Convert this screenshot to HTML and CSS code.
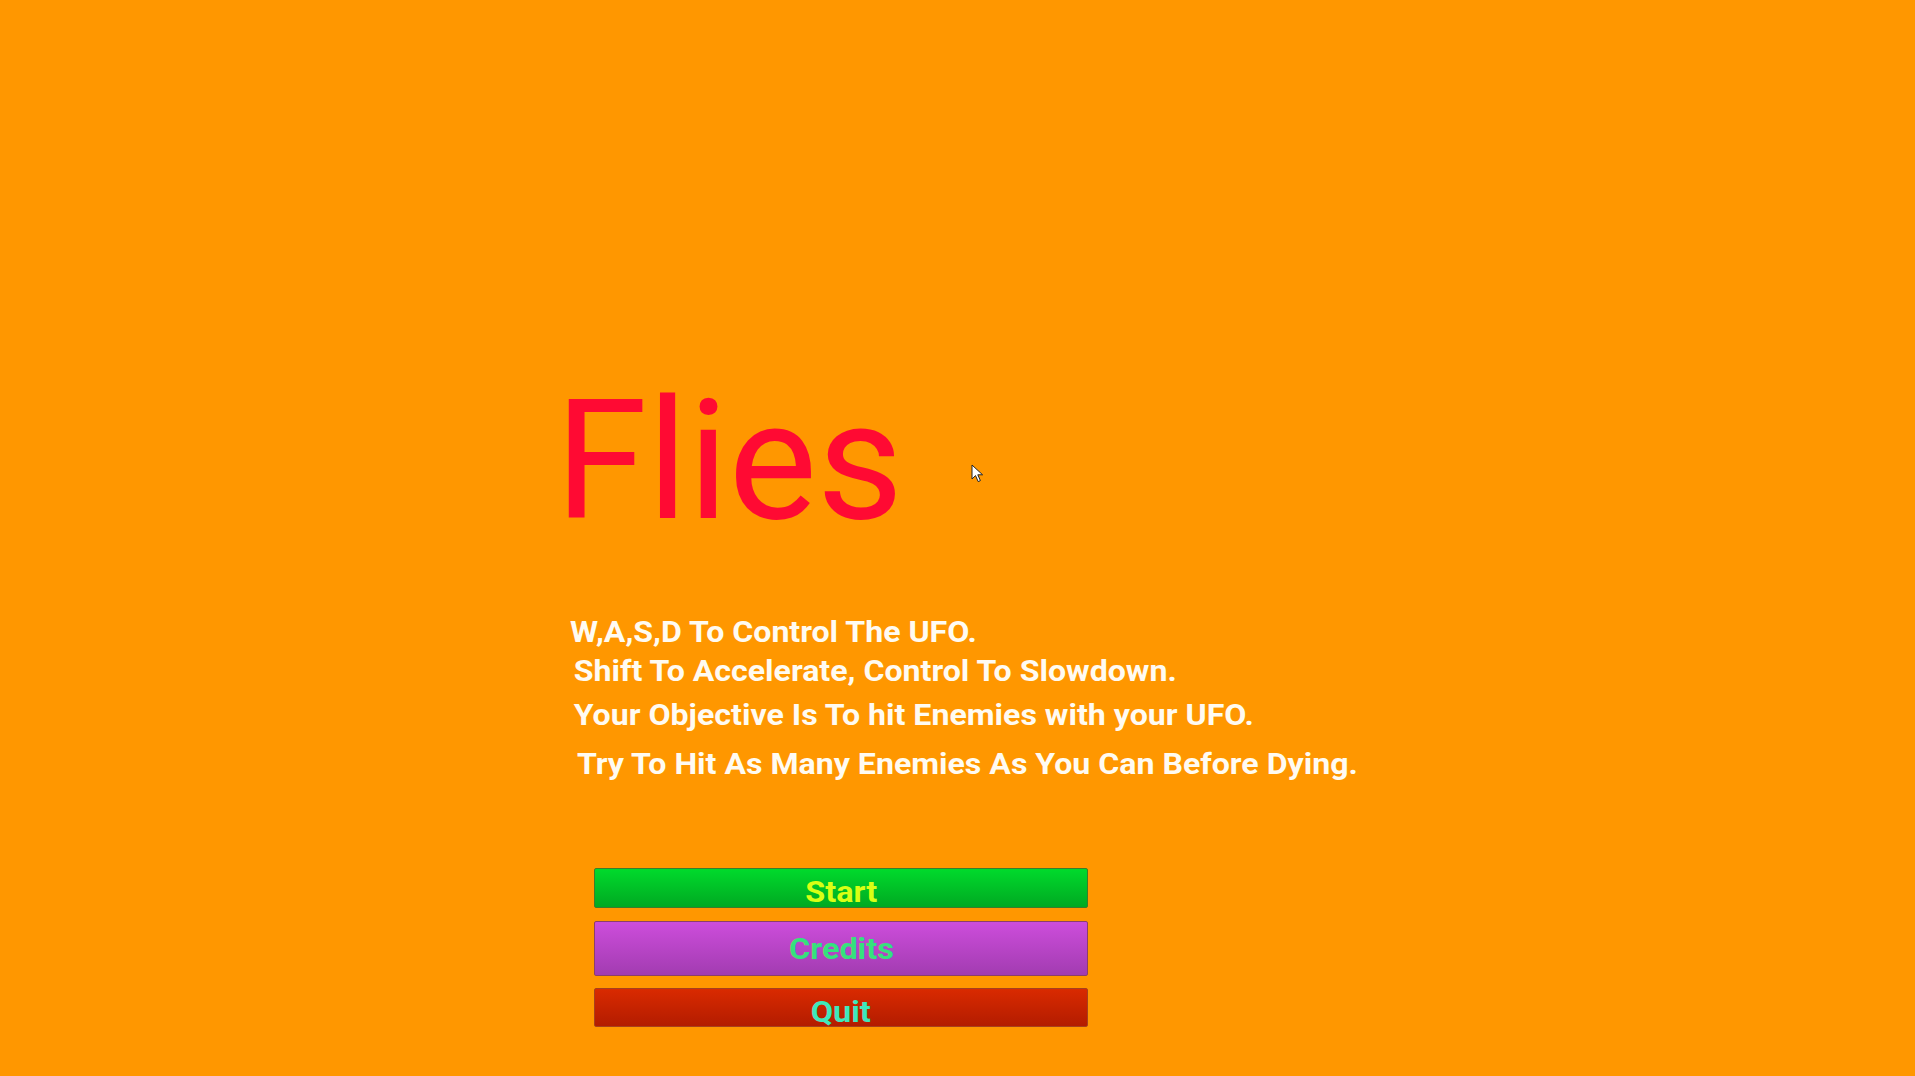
FILE: index.html
```html
<!DOCTYPE html>
<html>
<head>
<meta charset="utf-8">
<link rel="stylesheet" href="styles.css">
</head>
<body>
<main class="screen">
  <h1 class="title">Flies</h1>
  <div class="help">
    <p class="line l1">W,A,S,D To Control The UFO.</p>
    <p class="line l2">Shift To Accelerate, Control To Slowdown.</p>
    <p class="line l3">Your Objective Is To hit Enemies with your UFO.</p>
    <p class="line l4">Try To Hit As Many Enemies As You Can Before Dying.</p>
  </div>
  <nav class="menu">
    <button class="btn start"><span class="label">Start</span></button>
    <button class="btn credits"><span class="label">Credits</span></button>
    <button class="btn quit"><span class="label">Quit</span></button>
  </nav>
  <svg class="cursor" width="13" height="20" viewBox="0 0 13 20"><path d="M1 1 L1 15 L4.5 11.6 L7.2 17.6 L9.4 16.6 L6.8 10.8 L11.6 10.8 Z" fill="#fff" stroke="#222" stroke-width="1" stroke-linejoin="round"/></svg>
</main>
</body>
</html>
```
FILE: styles.css
```css
html, body {
  margin: 0;
  padding: 0;
  background: #ff9700;
}
.screen {
  position: relative;
  width: 1915px;
  height: 1076px;
  overflow: hidden;
  background: #ff9700;
  font-family: Roboto, "Liberation Sans", sans-serif;
  box-sizing: border-box;
  padding-top: 378px;
}
.title {
  margin: 0;
  padding-left: 555px;
  font-size: 167px;
  line-height: 167px;
  font-weight: 400;
  color: #ff0a33;
}
.help {
  margin-top: 69px;
  padding-left: 570px;
}
.line {
  margin: 0;
  font-size: 30px;
  line-height: 36px;
  font-weight: 700;
  color: #fffbf2;
  white-space: nowrap;
  transform: scaleX(1.07);
  transform-origin: 0 50%;
}
.l2 { margin-top: 3px; padding-left: 3.5px; }
.l3 { margin-top: 8px; padding-left: 3.5px; }
.l4 { margin-top: 13px; padding-left: 6.5px; }
.menu {
  margin-top: 86px;
  padding-left: 594px;
  display: flex;
  flex-direction: column;
  align-items: flex-start;
}
.btn {
  box-sizing: border-box;
  width: 494px;
  margin: 0;
  padding: 0;
  border-radius: 2px;
  font-family: Roboto, "Liberation Sans", sans-serif;
  font-weight: 700;
  font-size: 30px;
  line-height: 30px;
  text-align: center;
  cursor: default;
}
.label {
  display: inline-block;
  transform: scaleX(1.08);
}
.start {
  height: 40px;
  padding-top: 8px;
  background: linear-gradient(#00da2c, #00a922);
  border: 1px solid #3b7d2a;
  color: #d9ff14;
}
.credits {
  height: 55px;
  margin-top: 13px;
  line-height: 53px;
  background: linear-gradient(#cd4ddb, #a23cb1);
  border: 1px solid #8c3f6a;
  color: #35e27c;
}
.quit {
  height: 39px;
  margin-top: 12px;
  padding-top: 8px;
  background: linear-gradient(#d92a00, #b31c00);
  border: 1px solid #a8401c;
  color: #3ee8bc;
}
.cursor {
  position: absolute;
  left: 971px;
  top: 464px;
}
```
